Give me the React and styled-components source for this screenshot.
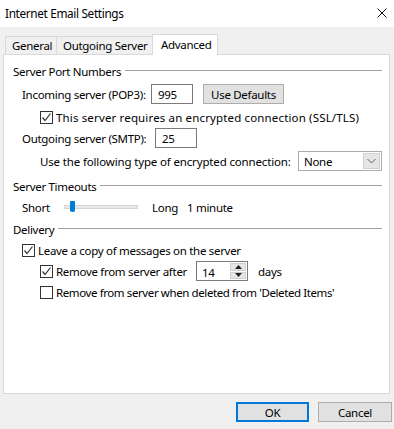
import React from "react";
import styled, { createGlobalStyle } from "styled-components";

const GlobalStyle = createGlobalStyle`
  html, body {
    margin: 0;
    padding: 0;
    background: #f0f0f0;
  }
  * {
    box-sizing: border-box;
  }
`;

const Window = styled.div`
  width: 394px;
  height: 429px;
  background: #f0f0f0;
  font-family: "Noto Sans", "Open Sans", sans-serif;
  font-size: 11.5px;
  letter-spacing: -0.3px;
  color: #000;
  display: flex;
  flex-direction: column;
`;

const TitleBar = styled.div`
  height: 27px;
  background: #fff;
  display: flex;
  align-items: center;
  justify-content: space-between;
  padding: 0 7px 2px 5px;
`;

const Title = styled.div`
  font-size: 11.8px;
  letter-spacing: -0.35px;
`;

const TabStrip = styled.div`
  height: 27px;
  display: flex;
  align-items: flex-end;
  padding-left: 5px;
`;

const Tab = styled.div`
  width: ${(p) => p.$w}px;
  height: ${(p) => (p.$active ? 21 : 18)}px;
  margin-bottom: ${(p) => (p.$active ? -1 : 0)}px;
  margin-left: ${(p) => p.$ml || 0}px;
  padding: 0 0 ${(p) => (p.$active ? 2 : 0)}px ${(p) => (p.$active ? 8 : 6)}px;
  background: ${(p) => (p.$active ? "#fff" : "#f0f0f0")};
  border: 1px solid #d9d9d9;
  border-bottom: none;
  display: flex;
  align-items: center;
  white-space: nowrap;
  position: relative;
  z-index: ${(p) => (p.$active ? 1 : 0)};
`;

const Panel = styled.div`
  height: 340px;
  margin: 0 4px 0 3px;
  background: #fff;
  border: 1px solid #d9d9d9;
  padding: 8px 7px 0 9px;
  display: flex;
  flex-direction: column;
`;

const SectionHeader = styled.div`
  height: 16px;
  display: flex;
  align-items: center;
  margin-top: ${(p) => p.$mt || 0}px;
  &::after {
    content: "";
    flex: 1;
    height: 1px;
    background: #a0a0a0;
    margin-left: 4px;
    margin-top: -2px;
  }
`;

const Row = styled.div`
  display: flex;
  align-items: center;
  height: ${(p) => p.$h || 16}px;
  margin-top: ${(p) => p.$mt || 0}px;
  padding-left: ${(p) => p.$indent || 0}px;
`;

const Label = styled.span`
  width: ${(p) => (p.$w ? `${p.$w}px` : "auto")};
  flex-shrink: 0;
  white-space: nowrap;
  letter-spacing: ${(p) => (p.$ls !== undefined ? `${p.$ls}px` : "inherit")};
`;

const TextBox = styled.div`
  width: ${(p) => p.$w}px;
  height: 20px;
  border: 1px solid #7a7a7a;
  background: #fff;
  padding-left: 6px;
  display: flex;
  align-items: center;
`;

const Button = styled.div`
  width: ${(p) => p.$w}px;
  height: 20px;
  margin-left: ${(p) => p.$ml || 0}px;
  background: #e1e1e1;
  border: ${(p) => (p.$primary ? "2px solid #0078d7" : "1px solid #adadad")};
  display: flex;
  align-items: center;
  justify-content: center;
`;

const Select = styled.div`
  width: 85px;
  height: 20px;
  border: 1px solid #acacac;
  background: #fff;
  display: flex;
  align-items: center;
  padding: 0 1px 0 5px;
`;

const SelectValue = styled.span`
  flex: 1;
`;

const SelectArrow = styled.div`
  width: 17px;
  height: 16px;
  background: #e5e5e5;
  border: 1px solid #d0d0d0;
  display: flex;
  align-items: center;
  justify-content: center;
`;

const Box = styled.div`
  width: 13px;
  height: 13px;
  border: 1px solid #333;
  background: #fff;
  flex-shrink: 0;
  margin-right: 3px;
  display: flex;
  align-items: center;
  justify-content: center;
`;

const Track = styled.div`
  width: 74px;
  height: 4px;
  background: #e7eaea;
  border: 1px solid #d6d6d6;
  position: relative;
  margin-right: 14px;
`;

const Thumb = styled.div`
  position: absolute;
  left: 5px;
  top: -5px;
  width: 5px;
  height: 11px;
  background: #007ad9;
  border-radius: 1px 1px 2px 2px;
`;

const Spinner = styled.div`
  width: 52px;
  height: 20px;
  margin-right: 10px;
  border: 1px solid #7a7a7a;
  background: #fff;
  display: flex;
  align-items: center;
  padding: 1px 1px 1px 5px;
`;

const SpinValue = styled.span`
  flex: 1;
  padding-top: 2px;
`;

const SpinButtons = styled.div`
  width: 16px;
  height: 100%;
  display: flex;
  flex-direction: column;
  gap: 1px;
`;

const SpinButton = styled.div`
  flex: 1;
  background: #e5e5e5;
  border: 1px solid #cfcfcf;
  display: flex;
  align-items: center;
  justify-content: center;
`;

const Footer = styled.div`
  display: flex;
  justify-content: flex-end;
  gap: 9px;
  padding: 8px 2px 0 0;
`;

const Checkbox = ({ checked }) => (
  <Box>
    {checked && (
      <svg width="11" height="11" viewBox="0 0 11 11">
        <path d="M1.5 5.5 L4 8.5 L9.5 1.5" fill="none" stroke="#333" strokeWidth="1.2" />
      </svg>
    )}
  </Box>
);

const CloseIcon = () => (
  <svg width="10" height="10" viewBox="0 0 10 10">
    <path d="M0.5 0.5 L9.5 9.5 M9.5 0.5 L0.5 9.5" stroke="#111" strokeWidth="1" />
  </svg>
);

const Chevron = () => (
  <svg width="9" height="6" viewBox="0 0 9 6">
    <path d="M0.5 1 L4.5 5 L8.5 1" fill="none" stroke="#606060" strokeWidth="1" />
  </svg>
);

const Triangle = ({ up }) => (
  <svg width="7" height="4" viewBox="0 0 7 4">
    <path d={up ? "M0 4 L3.5 0 L7 4 Z" : "M0 0 L3.5 4 L7 0 Z"} fill="#222" />
  </svg>
);

export default function App() {
  return (
    <>
      <GlobalStyle />
      <Window>
        <TitleBar>
          <Title>Internet Email Settings</Title>
          <CloseIcon />
        </TitleBar>
        <TabStrip>
          <Tab $w={52}>General</Tab>
          <Tab $w={98} $ml={-1}>Outgoing Server</Tab>
          <Tab $w={66} $ml={-2} $active>Advanced</Tab>
        </TabStrip>
        <Panel>
          <SectionHeader>Server Port Numbers</SectionHeader>
          <Row $h={20} $mt={5} $indent={9}>
            <Label $w={129}>Incoming server (POP3):</Label>
            <TextBox $w={42}>995</TextBox>
            <Button $w={81} $ml={10}>Use Defaults</Button>
          </Row>
          <Row $mt={5} $indent={27}>
            <Checkbox checked />
            <Label $ls={0.15}>This server requires an encrypted connection (SSL/TLS)</Label>
          </Row>
          <Row $h={20} $mt={3} $indent={9}>
            <Label $w={133}>Outgoing server (SMTP):</Label>
            <TextBox $w={42}>25</TextBox>
          </Row>
          <Row $h={20} $mt={3} $indent={27}>
            <Label $w={258} $ls={-0.15}>Use the following type of encrypted connection:</Label>
            <Select>
              <SelectValue>None</SelectValue>
              <SelectArrow>
                <Chevron />
              </SelectArrow>
            </Select>
          </Row>
          <SectionHeader $mt={7}>Server Timeouts</SectionHeader>
          <Row $mt={5} $indent={9}>
            <Label $w={42}>Short</Label>
            <Track>
              <Thumb />
            </Track>
            <Label $w={35}>Long</Label>
            <Label>1 minute</Label>
          </Row>
          <SectionHeader $mt={6}>Delivery</SectionHeader>
          <Row $mt={5} $indent={9}>
            <Checkbox checked />
            <Label>Leave a copy of messages on the server</Label>
          </Row>
          <Row $h={20} $mt={3} $indent={27}>
            <Checkbox checked />
            <Label $w={140}>Remove from server after</Label>
            <Spinner>
              <SpinValue>14</SpinValue>
              <SpinButtons>
                <SpinButton>
                  <Triangle up />
                </SpinButton>
                <SpinButton>
                  <Triangle />
                </SpinButton>
              </SpinButtons>
            </Spinner>
            <Label>days</Label>
          </Row>
          <Row $mt={3} $indent={27}>
            <Checkbox />
            <Label $ls={-0.4}>Remove from server when deleted from 'Deleted Items'</Label>
          </Row>
        </Panel>
        <Footer>
          <Button $w={73} $primary>OK</Button>
          <Button $w={74}>Cancel</Button>
        </Footer>
      </Window>
    </>
  );
}
